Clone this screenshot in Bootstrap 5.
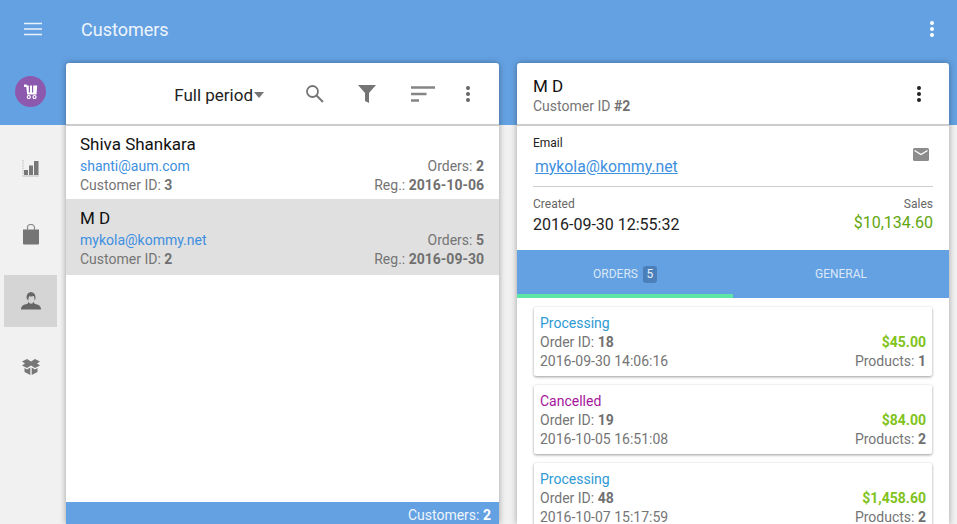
<!DOCTYPE html>
<html lang="en">
<head>
<meta charset="utf-8">
<title>Customers</title>
<link href="https://cdn.jsdelivr.net/npm/bootstrap@5.3.0/dist/css/bootstrap.min.css" rel="stylesheet">
<style>
html,body{height:524px;overflow:hidden}
body{font-family:Roboto,"Liberation Sans",sans-serif;font-size:14px;color:#757575;background:#f1f1f1;line-height:19px}
.top-strip{height:60px;background:#64a1e2;color:#fff;padding-bottom:2px}
.burger{width:66px}
.page-name{font-size:18px;padding-left:15px;color:#eef5fc}
.dots-top{margin-right:22px}
.stage{height:464px;background:linear-gradient(#64a1e2 65px,#f1f1f1 65px)}
.rail{width:66px;flex:none}
.logo-wrap{height:62px;padding-right:5px}
.logo-disc{width:31px;height:31px;border-radius:50%;background:#8d59ae}
.rail-stack{padding-top:20px;gap:14.6px}
.rail-item{width:53px;height:52px;margin-left:4px}
.rail-item.on{background:#d5d5d5}
.sheet{background:#fff;margin-top:3px;height:461px;box-shadow:0 0 6px rgba(0,0,0,.35);border-radius:3px 3px 0 0}
.sheet-l{width:433px;margin-right:18px}
.sheet-r{width:432px}
.sheet-head{height:63px;border-bottom:2px solid #ccc;flex:none}
.period{font-size:17px;color:#222;margin-right:24px;padding-top:3px}
.caret-mark{display:inline-block;border:5.500px solid transparent;border-top:6px solid #757575;border-bottom:0;margin-left:1px;vertical-align:3px}
.tools{margin-right:15px}
.tool{text-align:center;line-height:0}
.t-search{width:52px}
.t-filter{width:53px}
.t-sort{width:59px}
.t-more{width:32px}
.cust{padding:8px 15px 7px 14px;height:73px}
.cust.sel{background:#e0e0e0;height:76px;padding-top:9px}
.cust-name{font-size:17px;color:#111;line-height:21px;margin-bottom:2px}
.mail{color:#3d8fe0;text-decoration:none}
.cust b,.ord b,.sub-id b{color:#707070;font-weight:700}
.spacer-fill{flex:1}
.foot-bar{height:22px;background:#64a1e2;color:#eef5fc;padding-right:8px;line-height:26px}
.foot-bar b{color:#fff}
.head-r{padding:13px 16px 0}
.head-r .r-dots{margin:9px 11px 0 0}
.r-name{font-size:17px;color:#111;line-height:20px}
.sub-id{line-height:21px}
.contact{padding:9px 16px 0}
.label-dark{font-size:12px;color:#222;line-height:17px}
.mail-big{font-size:15.800px;color:#3d8fe0;margin-left:2px;display:inline-block;line-height:21px;margin-top:4px}
.env-icon{margin:0 4px 4px 0}
.rule-line{height:1px;background:#ccc;margin:9px 0 9px}
.label-soft{font-size:12px;line-height:16px;color:#666}
.created-val{font-size:16px;color:#222;line-height:21px;margin-top:2px}
.sales-val{font-size:16px;color:#62a60f;line-height:21px}
.info-block{height:124px;flex:none}
.tabs-bar{height:48px;background:#64a1e2;flex:none;font-size:12px;color:#dbe8f7}
.tab-cell{flex:1;height:48px}
.tab-cell.act{border-bottom:4px solid #5ce6a5;padding-top:4px}
.count-chip{display:inline-block;background:#4a7fba;border-radius:3px;color:#e8f0fa;width:14px;height:17px;line-height:17px;text-align:center;margin-left:5px}
.orders{padding:9px 17px 0 17px;gap:9px;overflow:hidden}
.ord{background:#fff;height:69px;flex:none;padding:7px 6px 0 6px;box-shadow:0 1px 3px rgba(0,0,0,.4);border-radius:2px;line-height:19px}
.st-proc{color:#2e9ad4}
.st-canc{color:#a4169a}
.amt{color:#7fc31c;font-weight:700}
</style>
</head>
<body>
<header class="top-strip d-flex align-items-center">
  <div class="burger d-flex justify-content-center">
    <svg width="20" height="14" viewBox="0 0 20 14"><path d="M1 1.500h18M1 7h18M1 12.500h18" stroke="#eaf2fb" stroke-width="1.700" fill="none"/></svg>
  </div>
  <div class="page-name flex-grow-1">Customers</div>
  <svg class="dots-top" width="6" height="18" viewBox="0 0 6 18"><circle cx="3" cy="3" r="2" fill="#fff"/><circle cx="3" cy="9" r="2" fill="#fff"/><circle cx="3" cy="15" r="2" fill="#fff"/></svg>
</header>
<div class="stage d-flex">
  <nav class="rail d-flex flex-column">
    <div class="logo-wrap d-flex align-items-center justify-content-center">
      <div class="logo-disc d-flex align-items-center justify-content-center">
        <svg width="14" height="15" viewBox="0 0 14 15"><path d="M0 0.500h2.500L3 1.500h1.800V8.500H6V1.500h2V8.500h1.200V1.500h4L12.500 10.500H3.200L2.300 3H0z" fill="#fff"/><circle cx="4.800" cy="13" r="1.500" fill="none" stroke="#fff" stroke-width="1.200"/><circle cx="10.500" cy="13" r="1.500" fill="none" stroke="#fff" stroke-width="1.200"/></svg>
      </div>
    </div>
    <div class="rail-stack d-flex flex-column">
      <div class="rail-item d-flex align-items-center justify-content-center">
        <svg width="17" height="18" viewBox="0 0 17 18"><path d="M1 1v15" stroke="#bbb" stroke-dasharray="1.500 1" fill="none"/><path d="M2 11h4v5H2zM7 6.500h4V16H7zM12 2h4.500v14H12z" fill="#777"/><path d="M0 17h17" stroke="#bbb"/></svg>
      </div>
      <div class="rail-item d-flex align-items-center justify-content-center">
        <svg width="18" height="21" viewBox="0 0 18 21"><path d="M1 5.500h16v14a1 1 0 0 1-1 1H2a1 1 0 0 1-1-1z" fill="#757575"/><path d="M5.500 6V3.500a3.500 3 0 0 1 7 0V6" fill="none" stroke="#8a8a8a" stroke-width="1.200"/></svg>
      </div>
      <div class="rail-item on d-flex align-items-center justify-content-center">
        <svg width="20" height="20" viewBox="0 0 20 20"><path d="M5.500 6.500a4.500 5.500 0 0 1 9 0c0 1-.3 2.300-.8 3-.4-1.500-.3-4-.9-4.500-1.500.6-3.500.4-4.700.2-.7 1-.5 3-.8 4.300-.6-.7-1.800-2-1.800-3z" fill="#666"/><path d="M7.500 10.500c.5 1.500 1.500 2.200 2.600 2.200s2.100-.7 2.600-2.200l.5 2c2.500.8 5.500 1.700 6.300 3.500.3.800.5 2 .5 2.500H0c0-.6.200-1.800.5-2.500.8-1.800 3.800-2.700 6.400-3.500z" fill="#666"/></svg>
      </div>
      <div class="rail-item d-flex align-items-center justify-content-center">
        <svg width="18" height="17" viewBox="0 0 18 17"><path d="M0 2.500 5 0l4 2.500L13 0l5 2.500-3 2 3 2-5 2.500-4-2.500L5 9 0 6.500l3-2z" fill="#777"/><path d="M2.500 9 5 10.500l3.300-2V16L2.500 13zM15.500 9 13 10.500l-3.300-2V16l5.800-3z" fill="#777"/></svg>
      </div>
    </div>
  </nav>

  <section class="sheet sheet-l d-flex flex-column">
    <div class="sheet-head d-flex align-items-center justify-content-end">
      <div class="period">Full period<span class="caret-mark"></span></div>
      <div class="tools d-flex align-items-center">
        <div class="tool t-search"><svg width="19" height="19" viewBox="0 0 19 19"><circle cx="7.500" cy="7.500" r="5.500" fill="none" stroke="#757575" stroke-width="1.800"/><path d="M11.500 11.500 18 18" stroke="#757575" stroke-width="2"/></svg></div>
        <div class="tool t-filter"><svg width="18" height="18" viewBox="0 0 18 18"><path d="M0 0h18L11 8v10l-4-2V8z" fill="#757575"/></svg></div>
        <div class="tool t-sort"><svg width="24" height="16" viewBox="0 0 24 16"><path d="M0 1.500h24M0 8h15.500M0 14.500h8" stroke="#858585" stroke-width="2.500" fill="none"/></svg></div>
        <div class="tool t-more"><svg width="6" height="18" viewBox="0 0 6 18"><circle cx="3" cy="3" r="2" fill="#666"/><circle cx="3" cy="9" r="2" fill="#666"/><circle cx="3" cy="15" r="2" fill="#666"/></svg></div>
      </div>
    </div>
    <div class="cust">
      <div class="cust-name">Shiva Shankara</div>
      <div class="d-flex justify-content-between"><a class="mail" href="#">shanti@aum.com</a><span>Orders: <b>2</b></span></div>
      <div class="d-flex justify-content-between"><span>Customer ID: <b>3</b></span><span>Reg.: <b>2016-10-06</b></span></div>
    </div>
    <div class="cust sel">
      <div class="cust-name">M D</div>
      <div class="d-flex justify-content-between"><a class="mail" href="#">mykola@kommy.net</a><span>Orders: <b>5</b></span></div>
      <div class="d-flex justify-content-between"><span>Customer ID: <b>2</b></span><span>Reg.: <b>2016-09-30</b></span></div>
    </div>
    <div class="spacer-fill"></div>
    <div class="foot-bar text-end">Customers: <b>2</b></div>
  </section>

  <section class="sheet sheet-r d-flex flex-column">
    <div class="sheet-head head-r d-flex justify-content-between">
      <div><div class="r-name">M D</div><div class="sub-id">Customer ID <b>#2</b></div></div>
      <svg class="r-dots" width="6" height="18" viewBox="0 0 6 18"><circle cx="3" cy="3" r="2" fill="#222"/><circle cx="3" cy="9" r="2" fill="#222"/><circle cx="3" cy="15" r="2" fill="#222"/></svg>
    </div>
    <div class="info-block contact">
      <div class="d-flex justify-content-between align-items-center">
        <div><div class="label-dark">Email</div><a class="mail-big" href="#">mykola@kommy.net</a></div>
        <svg class="env-icon" width="16" height="13" viewBox="0 0 16 13"><rect width="16" height="13" rx="1.500" fill="#8c8c8c"/><path d="M1.500 2.500 8 6.500l6.500-4" fill="none" stroke="#fff" stroke-width="1.200"/></svg>
      </div>
      <div class="rule-line"></div>
      <div class="d-flex justify-content-between">
        <div><div class="label-soft">Created</div><div class="created-val">2016-09-30 12:55:32</div></div>
        <div class="text-end"><div class="label-soft">Sales</div><div class="sales-val">$10,134.60</div></div>
      </div>
    </div>
    <div class="tabs-bar d-flex">
      <div class="tab-cell act d-flex align-items-center justify-content-center">ORDERS<span class="count-chip">5</span></div>
      <div class="tab-cell d-flex align-items-center justify-content-center">GENERAL</div>
    </div>
    <div class="orders d-flex flex-column">
      <article class="ord">
        <div class="st-proc">Processing</div>
        <div class="d-flex justify-content-between"><span>Order ID: <b>18</b></span><span class="amt">$45.00</span></div>
        <div class="d-flex justify-content-between"><span>2016-09-30 14:06:16</span><span>Products: <b>1</b></span></div>
      </article>
      <article class="ord">
        <div class="st-canc">Cancelled</div>
        <div class="d-flex justify-content-between"><span>Order ID: <b>19</b></span><span class="amt">$84.00</span></div>
        <div class="d-flex justify-content-between"><span>2016-10-05 16:51:08</span><span>Products: <b>2</b></span></div>
      </article>
      <article class="ord">
        <div class="st-proc">Processing</div>
        <div class="d-flex justify-content-between"><span>Order ID: <b>48</b></span><span class="amt">$1,458.60</span></div>
        <div class="d-flex justify-content-between"><span>2016-10-07 15:17:59</span><span>Products: <b>2</b></span></div>
      </article>
    </div>
  </section>
</div>
<script src="https://cdn.jsdelivr.net/npm/bootstrap@5.3.0/dist/js/bootstrap.bundle.min.js"></script>
</body>
</html>
